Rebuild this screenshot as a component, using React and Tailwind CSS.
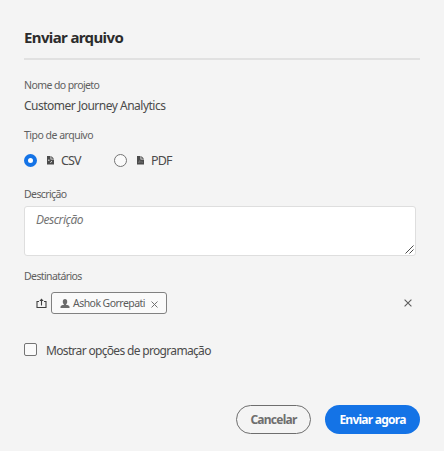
import React from "react";

function FileIcon({ pdf }) {
  return (
    <svg className="h-[9px] w-[9px] shrink-0" viewBox="0 0 9 9" fill="none">
      <path d="M1 0h3.500v3.500h3.500V8.500H1z" fill="#4b4b4b" />
      <path d="M5.300 0 8 2.800H5.300z" fill="#4b4b4b" />
      {pdf ? (
        <path d="M2.400 7 3.900 4.200M3 6.200c1.500-.5 2.800-.4 4 .2" stroke="#8c8c8c" strokeWidth="0.6" />
      ) : (
        <path d="M2 4.200h1.500M4.400 6.500l1.600-1.200" stroke="#eeeeee" strokeWidth="1" />
      )}
    </svg>
  );
}

function ShareIcon() {
  return (
    <svg className="h-[11px] w-[11px] shrink-0" viewBox="0 0 11 11" fill="none" stroke="#3f3f3f">
      <path d="M3 3.500H1v6h9v-6H8" strokeWidth="1.100" />
      <path d="M5.500 7.500V2" strokeWidth="1.100" />
      <path d="M3.300 3.100 5.500.5l2.200 2.600z" fill="#3f3f3f" stroke="none" />
    </svg>
  );
}

function UserIcon() {
  return (
    <svg className="h-[9px] w-[10px] shrink-0" viewBox="0 0 10 9" fill="#6b6b6b">
      <ellipse cx="5" cy="2.700" rx="2.200" ry="2.700" />
      <path d="M4 4.500h2v1.300c2 .3 3.500.9 3.500 2.100V9h-9V7.900c0-1.200 1.500-1.800 3.500-2.100z" />
    </svg>
  );
}

function Cross({ className }) {
  return (
    <svg className={className} viewBox="0 0 8 8" stroke="currentColor" strokeWidth="1.100">
      <path d="M.6.6 7.400 7.400M7.400.6.6 7.400" />
    </svg>
  );
}

const label = "h-4 text-[10.5px] leading-4 whitespace-nowrap text-[#606060]";

export default function App() {
  return (
    <div className="flex h-[451px] w-[444px] flex-col bg-[#f4f4f4] px-6 pt-[27px] font-['Noto_Sans',sans-serif] text-[#4b4b4b]">
      <h1 className="h-5 text-[15px] leading-5 font-bold tracking-[-0.62px] whitespace-nowrap text-[#2c2c2c]">Enviar arquivo</h1>
      <div className="mt-[11px] h-[2px] w-[396px] shrink-0 bg-[#e1e1e1]" />

      <div className={`${label} mt-[17px] tracking-[-0.58px]`}>Nome do projeto</div>
      <div className="mt-1 h-4 text-[12px] leading-[17px] tracking-[-0.5px] whitespace-nowrap">Customer Journey Analytics</div>

      <div className={`${label} mt-[14px] tracking-[-0.5px]`}>Tipo de arquivo</div>
      <div className="mt-2 flex h-[18px] items-center text-[12.5px] leading-[18px]">
        <label className="flex w-[90px] items-center">
          <span className="h-[13px] w-[13px] rounded-full border-4 border-[#1473e6] bg-white" />
          <span className="ml-[9px] flex"><FileIcon /></span>
          <span className="mt-[2px] ml-[6px] tracking-[-0.9px]">CSV</span>
        </label>
        <label className="flex items-center">
          <span className="h-[13px] w-[13px] rounded-full border border-[#747474] bg-[#fafafa]" />
          <span className="ml-[9px] flex"><FileIcon pdf /></span>
          <span className="mt-[2px] ml-[6px] tracking-[-0.9px]">PDF</span>
        </label>
      </div>

      <div className={`${label} mt-[17px] tracking-[-0.6px]`}>Descrição</div>
      <div className="mt-1 flex h-[50px] w-[392px] shrink-0 justify-between rounded-[3px] border border-[#dedede] bg-white pl-[11px]">
        <span className="mt-[5px] h-4 text-[12px] leading-4 tracking-[-0.5px] text-[#747474] italic">Descrição</span>
        <svg className="mr-[1px] mb-[1px] h-[9px] w-[9px] self-end" viewBox="0 0 9 9" stroke="#4b4b4b">
          <path d="M.5 8.500 8.500.5M4.500 8.500l4-4" />
        </svg>
      </div>

      <div className={`${label} mt-3 tracking-[-0.6px]`}>Destinatários</div>
      <div className="mt-2 flex h-[22px] items-center pl-3">
        <ShareIcon />
        <div className="ml-1 flex h-[22px] w-[116px] items-center rounded-[3px] border border-[#818181] bg-[#fafafa] pl-[8px]">
          <UserIcon />
          <span className="mb-[1px] ml-[3px] w-[72px] text-[10.5px] leading-4 tracking-[-0.55px] whitespace-nowrap text-[#5c5c5c]">Ashok Gorrepati</span>
          <Cross className="mt-[2px] ml-[6px] h-[7px] w-[7px] text-[#6b6b6b]" />
        </div>
        <Cross className="ml-[237px] h-2 w-2 text-[#5c5c5c]" />
      </div>

      <label className="mt-[26px] flex h-[18px] items-center">
        <span className="h-[13px] w-[13px] rounded-[2px] border border-[#747474] bg-[#fafafa]" />
        <span className="mt-[3px] ml-[9px] text-[12px] leading-[18px] tracking-[-0.67px] whitespace-nowrap">Mostrar opções de programação</span>
      </label>

      <div className="mt-[47px] flex gap-[14px] pl-[212px]">
        <button className="h-[29px] w-[75px] rounded-full border border-[#6e6e6e] text-[12px] font-bold tracking-[-0.75px] text-[#6e6e6e]">Cancelar</button>
        <button className="h-[29px] w-[95px] rounded-full bg-[#1473e6] text-[12px] font-bold tracking-[-0.75px] whitespace-nowrap text-white">Enviar agora</button>
      </div>
    </div>
  );
}
